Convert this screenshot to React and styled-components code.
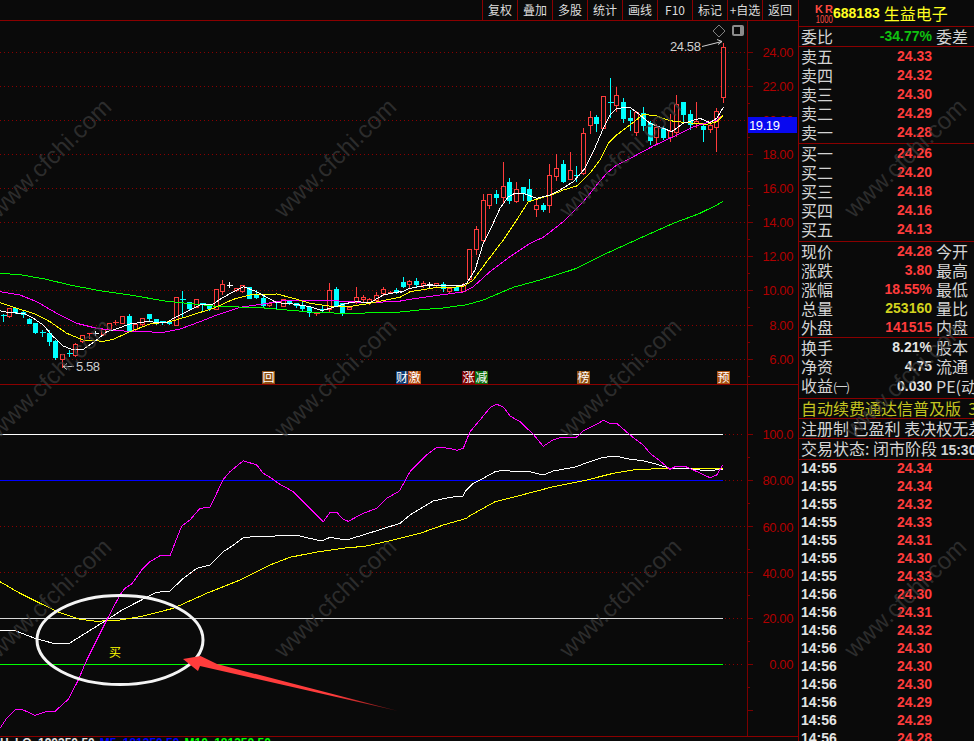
import React from "react";
import styled, { createGlobalStyle } from "styled-components";

// trace helpers: points were read off 3x crops, so map them back to page pixels
const z = (ox, oy, pts) => pts.map(([x, y]) => [ox + x / 3, oy + y / 3]);
const toPoints = (pts) => pts.map(([x, y]) => `${x.toFixed(1)},${y.toFixed(1)}`).join(" ");

const candlesLeft = [
    [8,160,165,165,182,0],[28,143,145,167,172,1],[46,142,144,156,158,0],[68,150,156,163,170,0],[88,172,177,188,190,0],
    [106,185,188,215,218,0],[126,208,215,217,228,0],[148,208,219,242,255,0],[166,238,244,290,298,0],[187,280,283,298,320,1],
    [208,268,280,282,288,0],[226,246,253,285,288,1],[247,226,226,244,246,1],[268,215,218,223,235,1],[286,210,220,221,225,2],
    [308,205,208,221,225,1],[328,190,190,208,210,1],[346,178,186,187,193,1],[367,168,168,188,190,1],[388,160,167,210,212,0],
    [406,192,192,207,210,1],[427,175,175,193,197,1],[448,162,162,175,184,0],[467,174,178,184,192,0],[487,180,184,185,192,0],
    [508,180,182,190,192,0],[529,112,112,194,194,1],[547,90,118,120,172,0],[568,126,127,144,146,0],[589,115,118,140,142,1],
    [607,126,129,130,154,0],[628,132,134,144,150,0],[649,88,88,146,148,1],[667,58,72,94,102,1],[688,62,76,78,82,2],
    [709,84,84,90,94,1],[727,74,76,94,96,1],[748,82,82,113,114,0],[769,88,102,112,114,0],[788,106,114,136,140,0],
    [808,125,130,136,138,1],[829,126,127,128,148,0],[848,113,118,137,138,1],[868,118,120,130,132,0],[889,130,130,136,142,0],
    [907,124,136,144,150,0],[928,138,140,157,168,0],[949,154,158,159,166,1],[967,132,146,148,156,0],[988,66,90,148,156,1],
    [1009,78,88,134,136,0],[1027,130,130,156,165,0],[1048,136,140,146,148,1],[1069,78,112,127,130,1],[1090,102,112,118,124,1],
    [1108,112,116,126,132,1],[1129,94,106,120,124,1],[1150,78,88,100,104,1],[1169,90,96,98,100,1],[1188,82,90,96,100,0],
];

const candlesRight = [
    [10,588,606,618,622,0],[28,598,604,612,622,1],[49,592,604,612,618,0],[70,600,610,616,622,1],[88,604,611,612,620,2],
    [108,606,610,616,620,1],[130,604,612,624,632,0],[148,618,624,632,636,1],[169,612,622,630,630,0],[190,606,616,632,634,1],
    [208,508,508,596,600,1],[229,435,448,508,522,1],[250,340,361,480,484,1],[268,338,343,374,384,1],[289,326,342,351,370,0],
    [310,243,319,351,368,1],[328,292,306,360,368,0],[349,304,328,362,366,1],[370,318,322,340,360,0],[388,294,327,360,362,0],
    [409,358,376,386,408,1],[430,366,375,387,392,0],[448,250,286,374,396,1],[469,220,265,287,300,1],[490,237,252,303,306,0],
    [511,213,270,296,298,1],[529,255,286,288,304,0],[550,141,160,280,282,1],[571,90,112,134,158,1],[589,102,111,128,152,0],
    [610,44,49,143,143,1],[631,-9,66,68,110,0],[649,17,46,74,92,1],[670,52,66,113,125,0],[691,86,114,120,150,0],
    [709,90,96,155,165,1],[730,78,100,134,150,0],[751,120,130,179,192,0],[769,130,141,170,190,1],[790,136,143,170,176,0],
    [811,100,152,172,184,1],[829,42,72,155,168,1],[850,66,66,102,128,0],[871,88,102,132,146,0],[889,62,124,130,140,1],
    [910,126,137,147,184,0],[931,124,136,146,156,1],[949,82,94,140,212,1],[970,-114,-99,51,66,1],
];

const toCandle = (ox, oy) => ([x, hi, top, bot, lo, kind]) => ({
    x: Math.round(ox + x / 3) + 0.5,
    hi: Math.round(oy + hi / 3) + 0.5,
    top: Math.round(oy + top / 3) + 0.5,
    bot: Math.round(oy + bot / 3) + 0.5,
    lo: Math.round(oy + lo / 3) + 0.5,
    kind,
});

const candles = [
    ...candlesLeft.map(toCandle(0, 260)),
    ...candlesRight.map(toCandle(400, 80)),
];

const maLines = [
    {
        color: "#ff00ff",
        pts: [
            ...z(0, 260, [[0,95],[60,105],[110,125],[170,160],[230,190],[290,205],[350,212],[420,215],[490,217],[540,207],[600,185],[650,165],[720,142],[790,132],[860,120],[980,120],[1040,125],[1100,127],[1200,125]]),
            ...z(400, 80, [[0,663],[50,655],[120,645],[190,636],[220,620],[270,575],[330,530],[390,490],[430,472],[490,425],[550,365],[590,315],[620,280],[650,255],[700,230],[760,198],[820,170],[880,140],[950,120],[970,105]]),
        ],
    },
    {
        color: "#00ff00",
        pts: [
            ...z(0, 260, [[0,40],[60,44],[130,56],[220,77],[300,92],[390,105],[500,124],[590,133],[660,140],[770,142],[860,150],[960,158],[1040,160],[1150,158],[1200,156]]),
            ...z(400, 80, [[78,688],[130,684],[200,674],[250,660],[340,622],[420,600],[490,578],[530,565],[620,520],[730,470],[820,430],[900,400],[950,375],[970,364]]),
        ],
    },
    {
        color: "#ffff00",
        pts: [
            ...z(0, 260, [[0,128],[50,145],[100,160],[150,185],[200,220],[250,240],[310,244],[340,238],[390,215],[450,192],[510,185],[560,170],[640,145],[700,118],[750,105],[830,102],[880,115],[930,130],[1000,140],[1060,138],[1110,130],[1200,112]]),
            ...z(400, 80, [[0,652],[30,635],[100,624],[190,620],[220,600],[260,545],[310,480],[350,420],[385,365],[420,355],[460,343],[490,330],[530,318],[570,280],[600,240],[625,190],[650,165],[690,135],[730,103],[770,108],[810,122],[860,128],[920,133],[950,125],[970,105]]),
        ],
    },
    {
        color: "#ffffff",
        pts: [
            ...z(0, 260, [[0,152],[28,158],[70,160],[100,175],[130,195],[160,230],[190,258],[220,270],[250,268],[290,240],[320,215],[340,210],[390,192],[440,185],[500,188],[520,175],[560,155],[600,135],[640,132],[660,118],[700,95],[730,80],[770,95],[800,112],[830,128],[880,132],[930,140],[965,152],[1000,142],[1040,130],[1070,125],[1110,128],[1150,105],[1200,95]]),
            ...z(400, 80, [[0,638],[30,625],[70,618],[120,615],[180,618],[200,610],[225,570],[250,490],[275,440],[300,385],[325,350],[345,340],[375,342],[410,355],[450,345],[480,330],[520,305],[555,265],[580,215],[610,145],[630,105],[650,85],[690,82],[720,105],[750,130],[790,145],[815,155],[850,130],[900,115],[930,128],[950,115],[970,82]]),
        ],
    },
];

const kdjLines = [
    {
        color: "#ffff00",
        pts: [
            ...z(0, 560, [[0,65],[60,100],[120,130],[180,158],[240,178],[290,184],[360,180],[420,170],[520,145],[620,100],[720,60]]),
            ...z(150, 440, [[270,420],[360,375],[420,352],[500,336],[600,322],[640,320],[730,300],[810,280],[880,255],[950,235],[960,227]]),
            ...z(380, 365, [[345,410],[425,390],[520,365],[620,345],[700,325],[760,315],[850,310],[1028,310]]),
        ],
    },
    {
        color: "#ffffff",
        pts: [
            ...z(0, 560, [[0,213],[45,212],[105,235],[160,250],[208,250],[320,180],[370,148],[440,112],[470,97],[510,93],[550,55],[590,25],[630,15]]),
            ...z(150, 440, [[220,335],[255,312],[280,293],[310,290],[440,286],[470,293],[515,303],[540,292],[575,298],[600,297],[680,272],[750,250],[780,225],[850,183],[900,172],[940,168]]),
            ...z(380, 365, [[255,380],[280,355],[310,340],[345,320],[370,316],[400,319],[450,320],[490,330],[520,318],[590,305],[620,293],[670,277],[710,274],[750,283],[790,287],[830,298],[870,310],[920,310],[985,318],[1028,312]]),
        ],
    },
    {
        color: "#ff00ff",
        pts: [
            ...z(0, 560, [[0,505],[20,475],[45,450],[65,448],[105,466],[135,456],[165,454],[205,418],[235,360],[260,300],[320,180],[360,105],[375,85],[395,72],[425,30]]),
            ...z(150, 440, [[0,365],[30,347],[60,347],[95,258],[120,240],[150,205],[180,202],[220,118],[240,95],[280,62],[320,75],[340,100],[365,115],[385,130],[430,155],[470,195],[520,245],[540,217],[560,217],[580,238],[595,244],[640,220],[680,205],[710,175],[745,155]]),
            ...z(380, 365, [[60,375],[90,320],[140,270],[170,247],[210,250],[230,256],[250,250],[270,200],[300,165],[330,128],[350,118],[370,126],[390,153],[420,170],[460,208],[490,244],[520,224],[540,218],[590,216],[610,197],[650,178],[670,166],[690,175],[710,175],[750,210],[790,240],[810,265],[840,288],[870,313],[885,305],[915,304],[940,315],[990,338],[1010,330],[1028,300]]),
        ],
    },
];

const tools = ["复权", "叠加", "多股", "统计", "画线", "F10", "标记", "+自选", "返回"];
const priceAxis = ["24.00", "22.00", "20.00", "18.00", "16.00", "14.00", "12.00", "10.00", "8.00", "6.00"];
const kdjAxis = [
    { y: 434, label: "100.0" },
    { y: 480, label: "80.00" },
    { y: 526.5, label: "60.00" },
    { y: 572.5, label: "40.00" },
    { y: 618, label: "20.00" },
    { y: 664, label: "0.00" },
];
const signs = [
    { x: 262, w: 13, text: "回", bg: "#8f4f12" },
    { x: 396, w: 12, text: "财", bg: "#0b3a72" },
    { x: 408, w: 13, text: "激", bg: "#b44c10" },
    { x: 462, w: 13, text: "涨", bg: "#7a0000" },
    { x: 475, w: 13, text: "减", bg: "#0a6a0a" },
    { x: 577, w: 13, text: "榜", bg: "#8f4f12" },
    { x: 717, w: 13, text: "预", bg: "#a8500f" },
];
const asks = [["卖五", "24.33"], ["卖四", "24.32"], ["卖三", "24.30"], ["卖二", "24.29"], ["卖一", "24.28"]];
const bids = [["买一", "24.26"], ["买二", "24.20"], ["买三", "24.18"], ["买四", "24.16"], ["买五", "24.13"]];
const quote = [
    ["现价", "24.28", "今开", "#ff3c3c"],
    ["涨跌", "3.80", "最高", "#ff3c3c"],
    ["涨幅", "18.55%", "最低", "#ff3c3c"],
    ["总量", "253160", "量比", "#d2d21e"],
    ["外盘", "141515", "内盘", "#ff3c3c"],
];
const ticks = [
    ["14:55", "24.34"], ["14:55", "24.34"], ["14:55", "24.32"], ["14:55", "24.33"],
    ["14:55", "24.31"], ["14:55", "24.30"], ["14:55", "24.33"], ["14:56", "24.30"],
    ["14:56", "24.31"], ["14:56", "24.32"], ["14:56", "24.30"], ["14:56", "24.30"],
    ["14:56", "24.30"], ["14:56", "24.29"], ["14:56", "24.29"], ["14:56", "24.28"],
];

const Candle = ({ x, hi, top, bot, lo, kind }) => {
    const color = kind === 0 ? "#00ffff" : kind === 1 ? "#ff3c3c" : "#ffffff";
    const flat = bot - top < 2;
    return (
        <g>
            <Wick x1={x} x2={x} y1={hi} y2={lo} $color={color} />
            {flat ? (
                <Wick x1={x - 3} x2={x + 3} y1={top} y2={top} $color={color} />
            ) : kind === 0 ? (
                <CandleBody x={x - 2.5} y={top - 0.5} width={5} height={bot - top + 1} $fill={color} $color={color} $solid />
            ) : (
                <CandleBody x={x - 2} y={top} width={4} height={bot - top} $fill="#0a0a0a" $color={color} />
            )}
        </g>
    );
};

const Ticks = ({ start, step, count }) => (
    <>
        {Array.from({ length: count }, (_, i) => {
            const y = Math.round(start + (i * step) / 2) + 0.5;
            return <AxisTick key={i} x1={747} x2={i % 2 === 0 ? 753 : 750} y1={y} y2={y} />;
        })}
    </>
);

const PricePane = () => (
    <Pane $height={363}>
        <ChartSvg width="798" height="363" viewBox="0 21 798 363">
            {priceAxis.map((label, i) => {
                const y = Math.round(51.7 + i * 34.1) + 0.5;
                return (
                    <g key={label}>
                        <GridDots x1={0} x2={745} y1={y} y2={y} />
                        <AxisLabel x={793} y={y + 4.5}>{label}</AxisLabel>
                    </g>
                );
            })}
            <AxisLine x1={747.5} x2={747.5} y1={21} y2={384} />
            <Ticks start={51.7} step={34.1} count={20} />
            {candles.map((c, i) => <Candle key={i} {...c} />)}
            {maLines.map((l) => <TraceLine key={l.color} points={toPoints(l.pts)} $color={l.color} />)}

            <Diamond points="719,25 725,31 719,37 713,31" />
            <rect x="732" y="25" width="12" height="11" rx="2" fill="#8c8c8c" />
            <rect x="734" y="27" width="6" height="7" fill="#0a0a0a" />

            <NoteText x={670} y={51}>24.58</NoteText>
            <NoteLine d="M702 46.5 L722 41.5 M717 39.5 L722 41.5 L718 44.5" />
            <NoteLine d="M74 366.5 H63 M67 363.5 L63 366.5 L67 369.5" />
            <NoteText x={76} y={371}>5.58</NoteText>

            {signs.map((s) => (
                <g key={s.text}>
                    <rect x={s.x} y={371} width={s.w} height={13} fill={s.bg} />
                    <SignText x={s.x + s.w / 2} y={382}>{s.text}</SignText>
                </g>
            ))}

            <rect x="748" y="117" width="49" height="16" fill="#0808f0" />
            <PriceTag x={749} y={130}>19.19</PriceTag>
        </ChartSvg>
    </Pane>
);

const KdjPane = () => (
    <Pane $height={351}>
        <ChartSvg width="798" height="351" viewBox="0 385 798 351">
            <defs>
                <linearGradient id="arrowFade" x1="183" y1="659" x2="398" y2="711" gradientUnits="userSpaceOnUse">
                    <stop offset="0.7" stopColor="#ff3c3c" />
                    <stop offset="1" stopColor="#701010" />
                </linearGradient>
            </defs>
            {kdjAxis.map((a) => (
                <AxisLabel key={a.label} x={793} y={Math.round(a.y) + 5}>{a.label}</AxisLabel>
            ))}
            <GridDots x1={0} x2={745} y1={526.5} y2={526.5} />
            <GridDots x1={0} x2={745} y1={572.5} y2={572.5} />
            <GridDots x1={725} x2={745} y1={434.5} y2={434.5} />
            <GridDots x1={725} x2={745} y1={480.5} y2={480.5} />
            <GridDots x1={725} x2={745} y1={618.5} y2={618.5} />
            <GridDots x1={725} x2={745} y1={664.5} y2={664.5} />
            <LevelLine x1={0} x2={723} y1={434.5} y2={434.5} $color="#ffffff" />
            <LevelLine x1={0} x2={723} y1={480.5} y2={480.5} $color="#0000ff" />
            <LevelLine x1={0} x2={723} y1={618.5} y2={618.5} $color="#d8d8d8" />
            <LevelLine x1={0} x2={723} y1={664.5} y2={664.5} $color="#00ff00" />
            <AxisLine x1={747.5} x2={747.5} y1={385} y2={736} />
            <Ticks start={434} step={46} count={13} />
            {kdjLines.map((l) => <TraceLine key={l.color} points={toPoints(l.pts)} $color={l.color} />)}

            <BuyMark x={115} y={657}>买</BuyMark>
            <ellipse cx="120" cy="640" rx="83" ry="44.5" fill="none" stroke="#f4f4f4" strokeWidth="3" />
            <polygon
                points="183,659 200.5,656 217,664 398,711 200,666 198,671"
                fill="url(#arrowFade)"
            />
        </ChartSvg>
    </Pane>
);

const QuoteRow = ({ label, value, side, color }) => (
    <Row>
        <Label>{label}</Label>
        <Value $color={color}>{value}</Value>
        <SideLabel>{side}</SideLabel>
    </Row>
);

const SidePanel = () => (
    <Panel>
        <StockHeader>
            <Logo>
                <LogoTop>KR</LogoTop>
                <LogoBottom>1000</LogoBottom>
            </Logo>
            <StockCode>688183</StockCode>
            <StockName>生益电子</StockName>
        </StockHeader>
        <Section>
            <QuoteRow label="委比" value="-34.77%" side="委差" color="#10c010" />
        </Section>
        <Section $pad={1}>
            {asks.map(([l, v]) => <QuoteRow key={l} label={l} value={v} color="#ff3c3c" />)}
        </Section>
        <Section $pad={2}>
            {bids.map(([l, v]) => <QuoteRow key={l} label={l} value={v} color="#ff3c3c" />)}
        </Section>
        <Section>
            {quote.map(([l, v, s, c]) => <QuoteRow key={l} label={l} value={v} side={s} color={c} />)}
        </Section>
        <Section $pad={3}>
            <QuoteRow label="换手" value="8.21%" side="股本" color="#e4e4e4" />
            <QuoteRow label="净资" value="4.75" side="流通" color="#e4e4e4" />
            <QuoteRow label={<>收益<SmallMark>(一)</SmallMark></>} value="0.030" side="PE(动" color="#e4e4e4" />
        </Section>
        <NoticeRow $color="#c4c420">自动续费通达信普及版&nbsp;&nbsp;3</NoticeRow>
        <NoticeRow>注册制 已盈利 表决权无差异</NoticeRow>
        <NoticeRow $tall>
            交易状态: 闭市阶段 <StateTime>15:30</StateTime>
        </NoticeRow>
        {ticks.map(([t, p], i) => (
            <TickRow key={i}>
                <TickTime>{t}</TickTime>
                <TickPrice>{p}</TickPrice>
            </TickRow>
        ))}
    </Panel>
);

const App = () => (
    <Screen>
        <GlobalStyle />
        <ChartColumn>
            <Toolbar>
                {tools.map((t) => <ToolButton key={t}>{t}</ToolButton>)}
            </Toolbar>
            <PricePane />
            <KdjPane />
            <StatusRow>
                <StatusText $color="#e0e0e0">H LO 190350.50</StatusText>
                <StatusText $color="#0000ff">M5 181350.50</StatusText>
                <StatusText $color="#00ff00">M10 181350.50</StatusText>
            </StatusRow>
        </ChartColumn>
        <SidePanel />
        <WatermarkLayer>
            {Array.from({ length: 12 }, (_, i) => <Watermark key={i}>www.cfchi.com</Watermark>)}
        </WatermarkLayer>
    </Screen>
);

const GlobalStyle = createGlobalStyle`
    html, body {
        margin: 0;
        padding: 0;
        background: #0a0a0a;
    }
`

const Screen = styled.div`
    position: relative;
    display: flex;
    width: 974px;
    height: 741px;
    overflow: hidden;
    background: #0a0a0a;
    font-family: "Liberation Sans", "Noto Sans CJK SC", sans-serif;
`

////////////////

const ChartColumn = styled.div`
    flex: none;
    width: 798px;
    display: flex;
    flex-direction: column;
    border-right: 1px solid #8a0000;
`

const Toolbar = styled.div`
    flex: none;
    height: 20px;
    display: flex;
    justify-content: flex-end;
    padding-right: 1px;
    border-bottom: 1px solid #8a0000;
`

const ToolButton = styled.div`
    width: 34px;
    height: 20px;
    border-left: 1px solid #8a0000;
    color: #dcdcdc;
    font: 12px/20px "Noto Sans CJK SC", sans-serif;
    text-align: center;
    white-space: nowrap;
`

const Pane = styled.div`
    flex: none;
    height: ${(p) => p.$height}px;
    border-bottom: 1px solid #8a0000;
`

const ChartSvg = styled.svg`
    display: block;
`

const StatusRow = styled.div`
    display: flex;
    gap: 5px;
    height: 4px;
    overflow: hidden;
`

const StatusText = styled.span`
    color: ${(p) => p.$color};
    font: bold 12px/13px "Liberation Sans", sans-serif;
    word-spacing: 3px;
    white-space: nowrap;
`

////////////////

const Wick = styled.line`
    stroke: ${(p) => p.$color};
    stroke-width: 1;
    shape-rendering: crispEdges;
`

const CandleBody = styled.rect`
    fill: ${(p) => p.$fill};
    stroke: ${(p) => (p.$solid ? "none" : p.$color)};
    stroke-width: 1;
    shape-rendering: crispEdges;
`

const TraceLine = styled.polyline`
    fill: none;
    stroke: ${(p) => p.$color};
    stroke-width: 1;
    shape-rendering: crispEdges;
`

const GridDots = styled.line`
    stroke: #8a0000;
    stroke-width: 1;
    stroke-dasharray: 1 3;
`

const LevelLine = styled.line`
    stroke: ${(p) => p.$color};
    stroke-width: 1;
    shape-rendering: crispEdges;
`

const AxisLine = styled.line`
    stroke: #7a0000;
    stroke-width: 1;
    shape-rendering: crispEdges;
`

const AxisTick = styled(AxisLine)``

const AxisLabel = styled.text`
    fill: #b00000;
    font: 13px "Liberation Sans", sans-serif;
    letter-spacing: -0.4px;
    text-anchor: end;
`

const PriceTag = styled.text`
    fill: #ffffff;
    font: 13px "Liberation Sans", sans-serif;
    letter-spacing: -0.4px;
`

const NoteText = styled.text`
    fill: #d0d0d0;
    font: 13px "Liberation Sans", sans-serif;
    letter-spacing: -0.4px;
`

const NoteLine = styled.path`
    fill: none;
    stroke: #d0d0d0;
    stroke-width: 1;
`

const Diamond = styled.polygon`
    fill: none;
    stroke: #808080;
    stroke-width: 1;
`

const SignText = styled.text`
    fill: #ffffff;
    font: 12px "Noto Sans CJK SC", sans-serif;
    text-anchor: middle;
`

const BuyMark = styled.text`
    fill: #ffff00;
    font: 12px "Noto Sans CJK SC", sans-serif;
    text-anchor: middle;
`

////////////////

const Panel = styled.div`
    flex: 1;
    min-width: 0;
    overflow: hidden;
    display: flex;
    flex-direction: column;
`

const StockHeader = styled.div`
    flex: none;
    height: 26px;
    display: flex;
    align-items: center;
    padding-left: 16px;
    border-bottom: 1px solid #8a0000;
`

const Logo = styled.div`
    width: 18px;
    display: flex;
    flex-direction: column;
    align-items: center;
    padding-top: 3px;
    color: #ff4a40;
`

const LogoTop = styled.span`
    font: bold 11px/9px "Liberation Sans", sans-serif;
    letter-spacing: 2px;
    margin-right: -2px;
`

const LogoBottom = styled.span`
    font: 11px/11px "Liberation Sans", sans-serif;
    transform: scaleX(0.7);
`

const StockCode = styled.span`
    color: #ffff20;
    font: bold 14px "Liberation Sans", sans-serif;
`

const StockName = styled.span`
    margin-left: 4px;
    color: #ffff20;
    font: 16px "Noto Sans CJK SC", sans-serif;
`

const Section = styled.div`
    flex: none;
    padding-bottom: ${(p) => p.$pad || 0}px;
    border-bottom: 1px solid #8a0000;
`

const Row = styled.div`
    height: 19px;
    display: grid;
    grid-template-columns: 32px 99px 1fr;
    padding-left: 2px;
    align-items: center;
    white-space: nowrap;
`

const Label = styled.span`
    color: #d4d4d4;
    font: 16px/19px "Noto Sans CJK SC", sans-serif;
`

const SmallMark = styled.span`
    font-size: 12px;
    letter-spacing: -1.5px;
`

const Value = styled.span`
    color: ${(p) => p.$color};
    font: bold 14px/19px "Liberation Sans", sans-serif;
    text-align: right;
`

const SideLabel = styled(Label)`
    padding-left: 4px;
`

const NoticeRow = styled.div`
    flex: none;
    height: ${(p) => (p.$tall ? 20 : 19)}px;
    padding-left: 2px;
    border-bottom: 1px solid #8a0000;
    color: ${(p) => p.$color || "#d4d4d4"};
    font: 16px/19px "Noto Sans CJK SC", sans-serif;
    white-space: nowrap;
    overflow: hidden;
`

const StateTime = styled.span`
    font: bold 14px/19px "Liberation Sans", sans-serif;
`

const TickRow = styled.div`
    flex: none;
    height: 18px;
    display: grid;
    grid-template-columns: 50px 81px;
    padding-left: 2px;
    align-items: start;
`

const TickTime = styled.span`
    color: #e4e4e4;
    font: bold 14px/16px "Liberation Sans", sans-serif;
`

const TickPrice = styled.span`
    color: #ff3c3c;
    font: bold 14px/16px "Liberation Sans", sans-serif;
    text-align: right;
`

////////////////

const WatermarkLayer = styled.div`
    position: absolute;
    left: -92px;
    top: 48px;
    display: grid;
    grid-template-columns: repeat(4, 285px);
    grid-auto-rows: 220px;
    place-items: center;
    pointer-events: none;
`

const Watermark = styled.span`
    color: rgba(60, 60, 60, 0.7);
    font: 24px "Liberation Sans", sans-serif;
    white-space: nowrap;
    transform: rotate(-44deg);
`

export default App
